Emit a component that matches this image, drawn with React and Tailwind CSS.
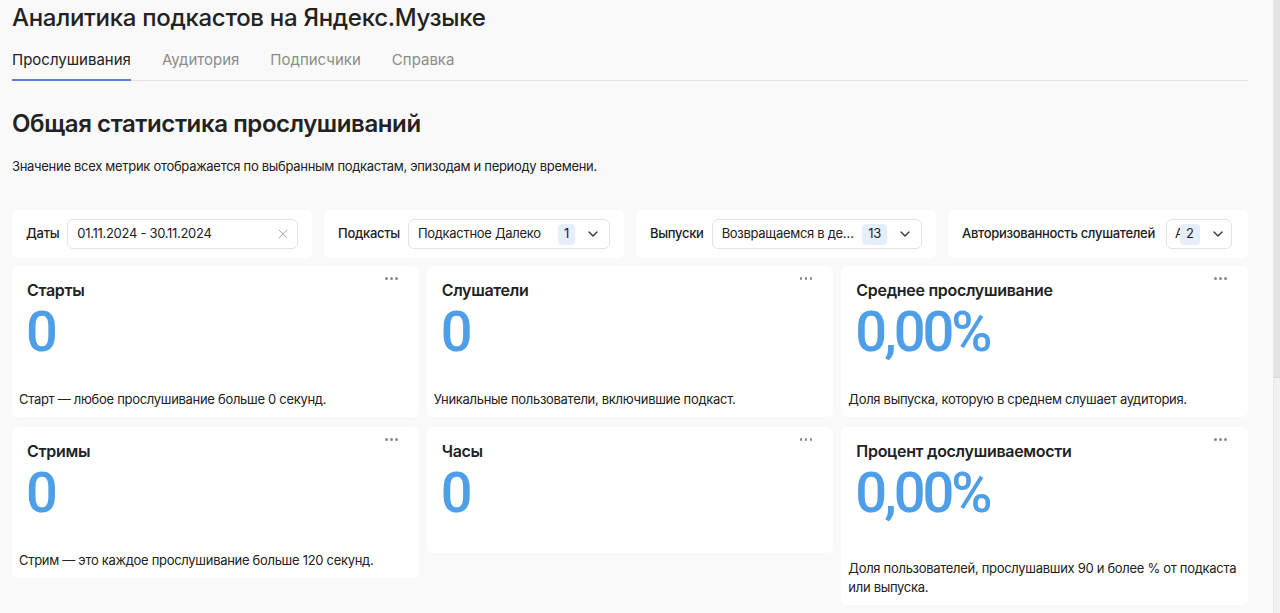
import React from "react";
import { ChevronDown, X } from "lucide-react";

const font = { fontFamily: "Inter, 'Noto Sans', sans-serif" };
const numFont = { fontFamily: "Roboto, Inter, sans-serif" };

function Dots() {
  return (
    <div className="absolute top-[10px] right-[20px] flex gap-[2.5px] p-[1px]">
      <span className="w-[2.5px] h-[2.5px] rounded-full bg-[#8a8a8a]" />
      <span className="w-[2.5px] h-[2.5px] rounded-full bg-[#8a8a8a]" />
      <span className="w-[2.5px] h-[2.5px] rounded-full bg-[#8a8a8a]" />
    </div>
  );
}

function Card({ title, value, desc, extra }) {
  return (
    <div className="relative bg-white rounded-[6px] pt-[14px] pb-[2px]">
      <Dots />
      <div className="pl-[15px] text-[16px] leading-[20px] font-semibold text-[#222]">{title}</div>
      <div
        className="pl-[14px] mt-[4px] text-[56px] leading-[56px] font-medium text-[#4f9fe8] tracking-[-3px]"
        style={numFont}
      >
        {value}
      </div>
      <div className={extra ? "h-[38px]" : "h-[30px]"} />
      {desc && (
        <div className="px-[7px] pb-[6px] text-[13px] leading-[19px] text-[#222]">{desc}</div>
      )}
    </div>
  );
}

function Badge({ children }) {
  return (
    <span className="h-[21px] px-[6px] flex items-center rounded-[4px] bg-[#e6eefb] text-[13px] text-[#222]">
      {children}
    </span>
  );
}

function Select({ text, badge }) {
  return (
    <div className="flex-1 min-w-0 h-[30px] flex items-center border border-[#e3e3e3] rounded-[6px] bg-white pl-[9px] pr-[8px]">
      <span className="flex-1 min-w-0 truncate text-[13px] text-[#222]">{text}</span>
      <div className="ml-[8px] flex items-center gap-[10px]">
        <Badge>{badge}</Badge>
        <ChevronDown size={16} strokeWidth={2} className="text-[#333]" />
      </div>
    </div>
  );
}

function Panel({ label, children }) {
  return (
    <div className="h-[48px] bg-white rounded-[6px] flex items-center gap-2 pl-[14px] pr-[14px]">
      <span className="text-[13px] font-medium text-[#222] whitespace-nowrap">{label}</span>
      {children}
    </div>
  );
}

const tabBase = "pt-[10px] pb-[9px] text-[15px] leading-[20px] border-b-2 -mb-px tracking-normal";

export default function App() {
  return (
    <div className="flex h-[613px] overflow-hidden bg-[#f9f9f9] tracking-[-0.3px]" style={font}>
      <div className="flex-1 pl-3 pr-[25px]">
        <h1 className="pt-[2px] text-[24px] leading-[32px] font-medium text-[#222]">
          Аналитика подкастов на Яндекс.Музыке
        </h1>
        <div className="mt-[6px] flex gap-[31px] border-b border-[#e3e3e3]">
          <div className={tabBase + " text-[#222] border-[#5a80d8]"}>Прослушивания</div>
          <div className={tabBase + " text-[#8c8c8c] border-transparent"}>Аудитория</div>
          <div className={tabBase + " text-[#8c8c8c] border-transparent"}>Подписчики</div>
          <div className={tabBase + " text-[#8c8c8c] border-transparent"}>Справка</div>
        </div>
        <h2 className="mt-[27px] text-[24px] leading-[32px] font-semibold text-[#222] tracking-[-0.4px]">
          Общая статистика прослушиваний
        </h2>
        <p className="mt-[17px] text-[13px] leading-[18px] text-[#222]">
          Значение всех метрик отображается по выбранным подкастам, эпизодам и периоду времени.
        </p>

        <div className="mt-[35px] grid grid-cols-4 gap-3">
          <Panel label="Даты">
            <div className="flex-1 h-[30px] flex items-center border border-[#e3e3e3] rounded-[6px] bg-white pl-[9px] pr-[6px]">
              <span className="flex-1 text-[13px] text-[#222]">01.11.2024 - 30.11.2024</span>
              <X size={16} strokeWidth={1.3} className="text-[#9a9a9a]" />
            </div>
          </Panel>
          <Panel label="Подкасты">
            <Select text="Подкастное Далеко" badge="1" />
          </Panel>
          <Panel label="Выпуски">
            <Select text="Возвращаемся в детство" badge="13" />
          </Panel>
          <div className="h-[48px] bg-white rounded-[6px] flex items-center gap-2 pl-[14px] pr-[16px]">
            <span className="flex-1 text-[13px] font-medium text-[#222] whitespace-nowrap">
              Авторизованность слушателей
            </span>
            <div className="w-[66px] h-[30px] flex items-center border border-[#e3e3e3] rounded-[6px] bg-white pl-[8px] pr-[8px]">
              <span className="w-[5px] shrink-0 overflow-hidden whitespace-nowrap text-[13px] text-[#222]">
                Авторизованные
              </span>
              <div className="flex items-center gap-[10px]">
                <Badge>2</Badge>
                <ChevronDown size={16} strokeWidth={2} className="text-[#333]" />
              </div>
            </div>
          </div>
        </div>

        <div className="mt-2 grid grid-cols-3 gap-x-2 gap-y-[10px] items-start">
          <Card title="Старты" value="0" desc="Старт — любое прослушивание больше 0 секунд." />
          <Card title="Слушатели" value="0" desc="Уникальные пользователи, включившие подкаст." />
          <Card title="Среднее прослушивание" value="0,00%" desc="Доля выпуска, которую в среднем слушает аудитория." />
          <Card title="Стримы" value="0" desc="Стрим — это каждое прослушивание больше 120 секунд." />
          <Card title="Часы" value="0" />
          <Card
            title="Процент дослушиваемости"
            value="0,00%"
            extra
            desc="Доля пользователей, прослушавших 90 и более % от подкаста или выпуска."
          />
        </div>
      </div>
      <div className="w-[7px] bg-[#f1f1f1] border-l border-[#e6e6e6] flex flex-col">
        <div className="h-[378px] bg-[#e3e3e3] border-b border-[#d6d6d6]" />
      </div>
    </div>
  );
}
